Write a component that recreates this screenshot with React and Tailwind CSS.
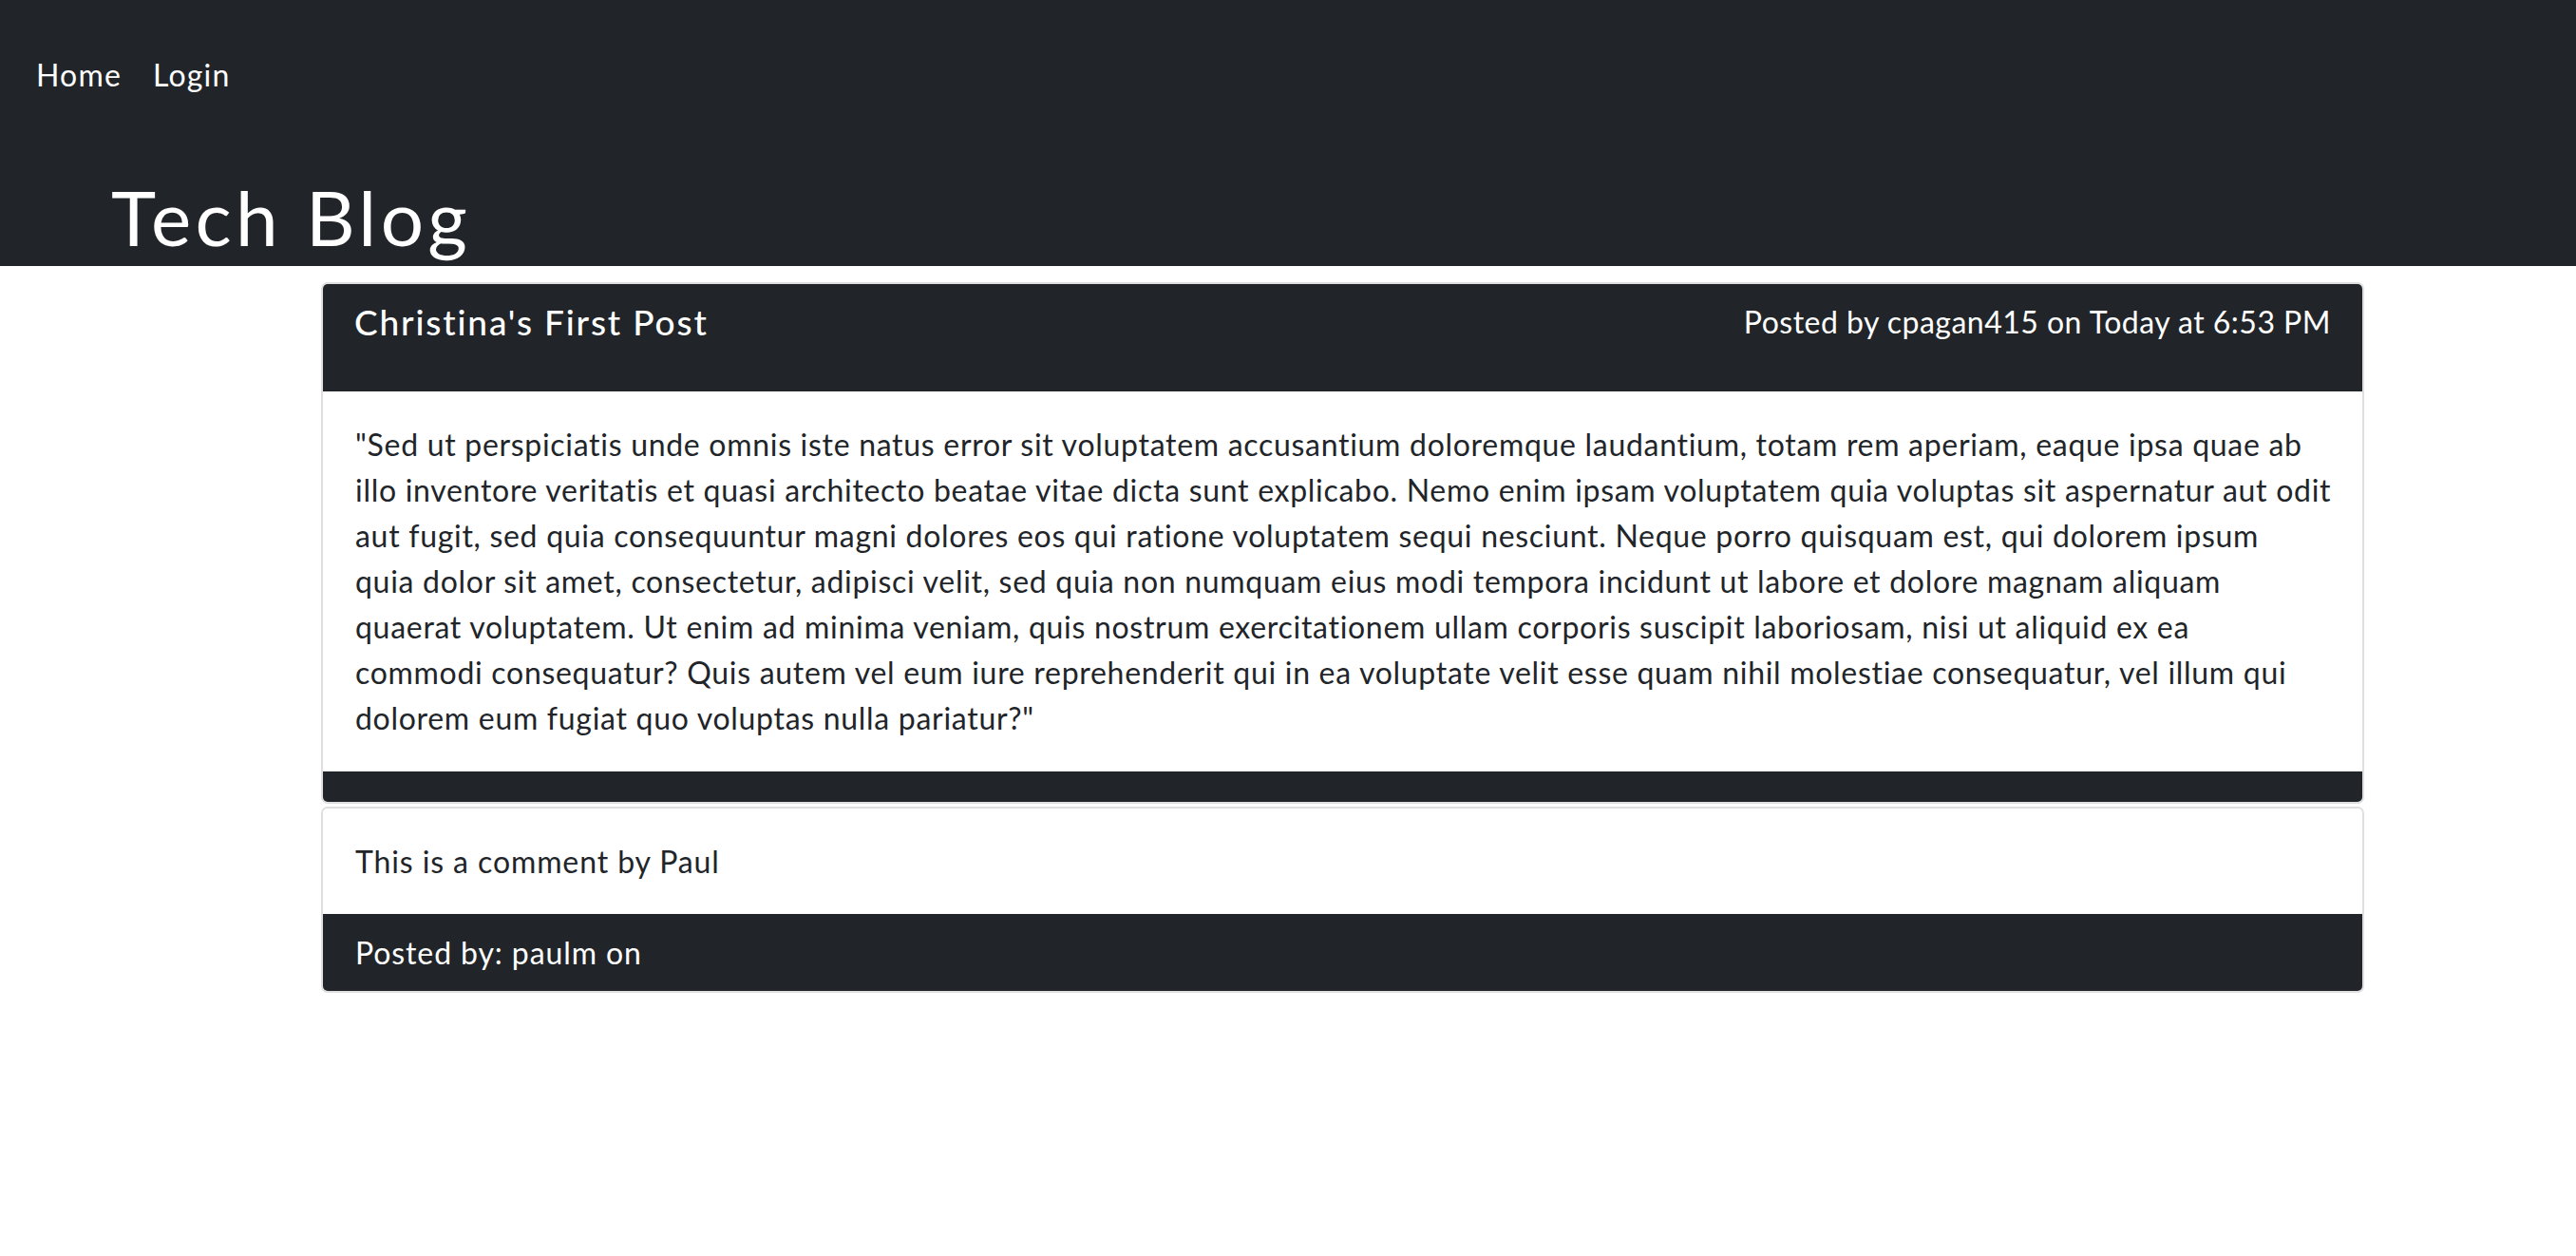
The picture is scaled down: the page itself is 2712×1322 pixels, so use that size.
const bodyLines = [
  '"Sed ut perspiciatis unde omnis iste natus error sit voluptatem accusantium doloremque laudantium, totam rem aperiam, eaque ipsa quae ab',
  'illo inventore veritatis et quasi architecto beatae vitae dicta sunt explicabo. Nemo enim ipsam voluptatem quia voluptas sit aspernatur aut odit',
  'aut fugit, sed quia consequuntur magni dolores eos qui ratione voluptatem sequi nesciunt. Neque porro quisquam est, qui dolorem ipsum',
  'quia dolor sit amet, consectetur, adipisci velit, sed quia non numquam eius modi tempora incidunt ut labore et dolore magnam aliquam',
  'quaerat voluptatem. Ut enim ad minima veniam, quis nostrum exercitationem ullam corporis suscipit laboriosam, nisi ut aliquid ex ea',
  'commodi consequatur? Quis autem vel eum iure reprehenderit qui in ea voluptate velit esse quam nihil molestiae consequatur, vel illum qui',
  'dolorem eum fugiat quo voluptas nulla pariatur?"',
]

function Nav() {
  return (
    <nav className="flex gap-[33px] pl-[38px] pt-[55px] text-[32px] leading-[48px] tracking-[0.037em]">
      <a href="#" className="text-white">Home</a>
      <a href="#" className="text-white">Login</a>
    </nav>
  )
}

function PostCard() {
  return (
    <article className="overflow-hidden rounded-[7px] border-2 border-[#dfdfdf]">
      <div className="flex items-start justify-between bg-[#212529] px-[33px] pt-[18px] pb-[52px] text-white">
        <h5 className="text-[37px] font-medium leading-[43px] tracking-[0.05em]">Christina's First Post</h5>
        <p className="text-[32px] leading-[43px] tracking-[0.015em]">Posted by cpagan415 on Today at 6:53 PM</p>
      </div>
      <div className="bg-white px-[34px] py-[32px]">
        <p className="text-[32px] leading-[48px] tracking-[0.022em]">
          {bodyLines.map((line) => (
            <span key={line} className="block whitespace-nowrap">{line}</span>
          ))}
        </p>
      </div>
      <div className="h-[32px] bg-[#212529]" />
    </article>
  )
}

function CommentCard() {
  return (
    <article className="mt-[3px] overflow-hidden rounded-[7px] border-2 border-[#dfdfdf]">
      <div className="bg-white px-[34px] pt-[32px] pb-[31px]">
        <p className="text-[32px] leading-[48px] tracking-[0.028em]">This is a comment by Paul</p>
      </div>
      <div className="bg-[#212529] px-[34px] py-[20px] text-white">
        <p className="text-[32px] leading-[41px] tracking-[0.028em]">Posted by: paulm on</p>
      </div>
    </article>
  )
}

export default function App() {
  return (
    <div className="min-h-screen bg-white font-['Lato',sans-serif] text-[#212529]">
      <header className="flex h-[280px] flex-col bg-[#212529] text-white">
        <Nav />
        <h1 className="mt-auto mb-[12px] pl-[117px] text-[80px] font-normal leading-none tracking-[0.055em]">Tech Blog</h1>
      </header>
      <main className="pl-[338px] pr-[223px] pt-[17px]">
        <PostCard />
        <CommentCard />
      </main>
    </div>
  )
}
